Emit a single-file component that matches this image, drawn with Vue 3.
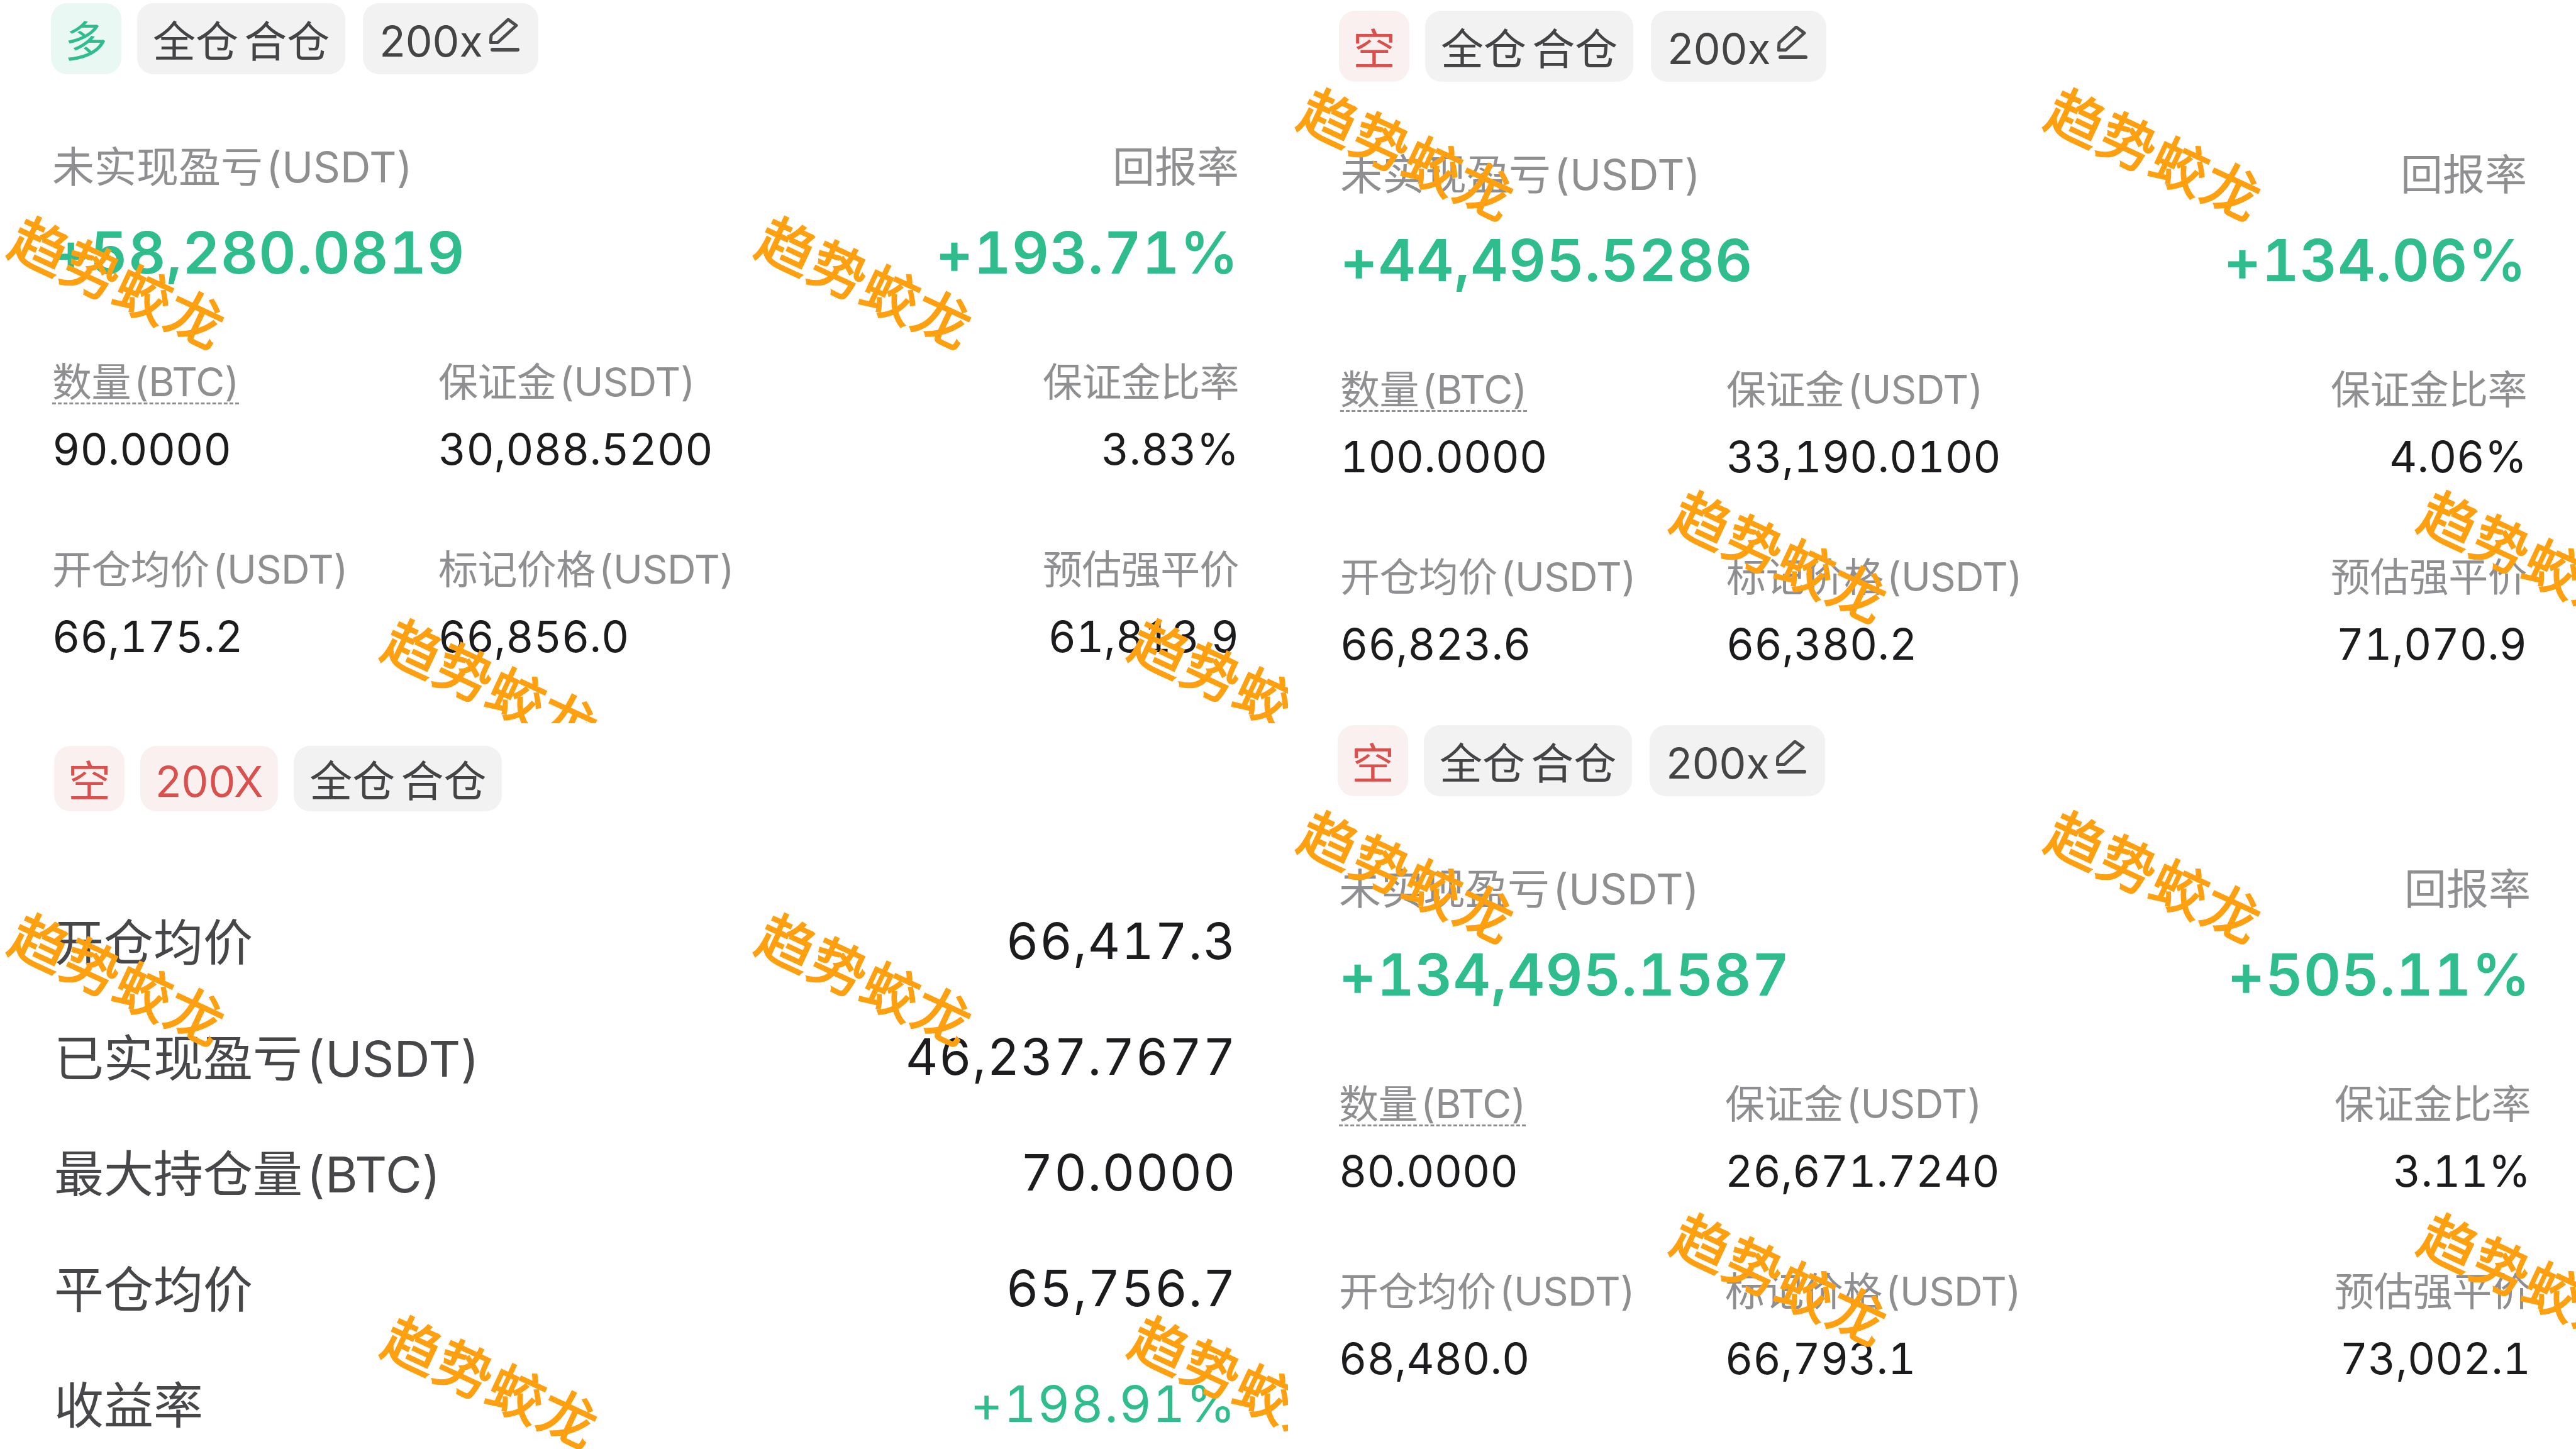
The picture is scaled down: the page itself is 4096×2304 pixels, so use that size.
<script setup>
const positions = [
  {
    cls: 'p-lt', side: '多', sideCls: 'long',
    pnl: '+58,280.0819', roe: '+193.71%',
    qtyUnit: '90.0000', margin: '30,088.5200', ratio: '3.83%',
    open: '66,175.2', mark: '66,856.0', liq: '61,813.9',
    marks: [[190, 445], [1378, 445], [783, 1085], [1971, 1085]],
  },
  {
    cls: 'p-rt', side: '空', sideCls: 'short',
    pnl: '+44,495.5286', roe: '+134.06%',
    qtyUnit: '100.0000', margin: '33,190.0100', ratio: '4.06%',
    open: '66,823.6', mark: '66,380.2', liq: '71,070.9',
    marks: [[192, 241], [1380, 241], [785, 881], [1973, 881]],
  },
  {
    cls: 'p-rb', side: '空', sideCls: 'short',
    pnl: '+134,495.1587', roe: '+505.11%',
    qtyUnit: '80.0000', margin: '26,671.7240', ratio: '3.11%',
    open: '68,480.0', mark: '66,793.1', liq: '73,002.1',
    marks: [[192, 254], [1380, 254], [785, 894], [1973, 894]],
  },
]
const history = [
  { label: '开仓均价', value: '66,417.3' },
  { label: '已实现盈亏 (USDT)', value: '46,237.7677' },
  { label: '最大持仓量 (BTC)', value: '70.0000' },
  { label: '平仓均价', value: '65,756.7' },
  { label: '收益率', value: '+198.91%', up: true },
]
const historyMarks = [[190, 403], [1378, 403], [783, 1043], [1971, 1043]]
const wmStyle = (m) => ({ left: m[0] + 'px', top: m[1] + 'px' })
</script>

<template>
  <div class="page">
    <div class="col">
      <section class="panel p-lt">
        <div class="tags">
          <span class="tag side long">多</span>
          <span class="tag">全仓 合仓</span>
          <span class="tag lev"><span>200x</span><svg class="pen" viewBox="0 0 48 54" width="48" height="54" fill="none" stroke="#4c4c4e" stroke-width="5" stroke-linejoin="round" stroke-linecap="round"><path d="M30 2 L43 11.5 L13.5 38.5 L2 38.5 L3 27 Z" /><path d="M5 50 H45" stroke-width="6" /></svg></span>
        </div>
        <div class="head"><span>未实现盈亏 (USDT)</span><span>回报率</span></div>
        <div class="big"><span>{{ positions[0].pnl }}</span><span>{{ positions[0].roe }}</span></div>
        <div class="grid">
          <span class="lb"><span class="dash">数量 (BTC)</span></span>
          <span class="lb">保证金 (USDT)</span>
          <span class="lb r">保证金比率</span>
          <span class="val">{{ positions[0].qtyUnit }}</span>
          <span class="val">{{ positions[0].margin }}</span>
          <span class="val r">{{ positions[0].ratio }}</span>
          <span class="lb row3">开仓均价 (USDT)</span>
          <span class="lb row3">标记价格 (USDT)</span>
          <span class="lb row3 r">预估强平价</span>
          <span class="val">{{ positions[0].open }}</span>
          <span class="val">{{ positions[0].mark }}</span>
          <span class="val r">{{ positions[0].liq }}</span>
        </div>
        <span v-for="(m, i) in positions[0].marks" :key="i" class="wm" :style="wmStyle(m)">趋势蛟龙</span>
      </section>

      <section class="panel p-lb">
        <div class="tags tags-h">
          <span class="tag side short">空</span>
          <span class="tag x short">200X</span>
          <span class="tag">全仓 合仓</span>
        </div>
        <div class="hist">
          <div v-for="row in history" :key="row.label" class="hrow">
            <span class="hl">{{ row.label }}</span>
            <span class="hv" :class="{ up: row.up }">{{ row.value }}</span>
          </div>
        </div>
        <span v-for="(m, i) in historyMarks" :key="i" class="wm" :style="wmStyle(m)">趋势蛟龙</span>
      </section>
    </div>

    <div class="col">
      <section v-for="p in positions.slice(1)" :key="p.pnl" class="panel" :class="p.cls">
        <div class="tags">
          <span class="tag side" :class="p.sideCls">{{ p.side }}</span>
          <span class="tag">全仓 合仓</span>
          <span class="tag lev"><span>200x</span><svg class="pen" viewBox="0 0 48 54" width="48" height="54" fill="none" stroke="#4c4c4e" stroke-width="5" stroke-linejoin="round" stroke-linecap="round"><path d="M30 2 L43 11.5 L13.5 38.5 L2 38.5 L3 27 Z" /><path d="M5 50 H45" stroke-width="6" /></svg></span>
        </div>
        <div class="head"><span>未实现盈亏 (USDT)</span><span>回报率</span></div>
        <div class="big"><span>{{ p.pnl }}</span><span>{{ p.roe }}</span></div>
        <div class="grid">
          <span class="lb"><span class="dash">数量 (BTC)</span></span>
          <span class="lb">保证金 (USDT)</span>
          <span class="lb r">保证金比率</span>
          <span class="val">{{ p.qtyUnit }}</span>
          <span class="val">{{ p.margin }}</span>
          <span class="val r">{{ p.ratio }}</span>
          <span class="lb row3">开仓均价 (USDT)</span>
          <span class="lb row3">标记价格 (USDT)</span>
          <span class="lb row3 r">预估强平价</span>
          <span class="val">{{ p.open }}</span>
          <span class="val">{{ p.mark }}</span>
          <span class="val r">{{ p.liq }}</span>
        </div>
        <span v-for="(m, i) in p.marks" :key="i" class="wm" :style="wmStyle(m)">趋势蛟龙</span>
      </section>
    </div>
  </div>
</template>

<style scoped>
.page {
  width: 4096px;
  height: 2304px;
  display: flex;
  background: #fff;
  overflow: hidden;
  font-family: Inter, "Noto Sans CJK SC", sans-serif;
  font-variant-numeric: tabular-nums;
}
.col {
  width: 2048px;
  display: flex;
  flex-direction: column;
}
.panel {
  position: relative;
  overflow: hidden;
  box-sizing: border-box;
  padding: 5px 78px 0 83px;
}
.p-lt { height: 1150px; }
.p-lb { height: 1154px; padding: 36px 82px 0 86px; }
.p-rt { height: 1136px; padding-top: 17px; }
.p-rb { height: 1168px; padding-top: 17px; padding-right: 72px; padding-left: 81px; }

.tags {
  display: flex;
  gap: 25px;
  height: 113px;
  margin-left: -2px;
}
.tags-h { height: 104px; margin-left: 0; }
.tag {
  display: flex;
  align-items: center;
  box-sizing: border-box;
  padding: 8px 25px 0;
  border-radius: 26px;
  background: #f2f2f3;
  color: #444446;
  font-size: 68px;
  font-variant-numeric: normal;
  line-height: 1;
  white-space: pre;
  word-spacing: -10px;
}
.tag.side { padding-left: 22px; padding-right: 22px; }
.tag.x { padding-left: 24px; padding-right: 24px; }
.tag.long { background: #e9f8f2; color: #2fbd8e; }
.tag.short { background: #fbf0f0; color: #d9504c; }
.lev { gap: 10px; margin-left: 3px; padding: 6px 30px 0 26px; font-size: 68px; }
.pen { margin-top: -18px; }

.head {
  display: flex;
  justify-content: space-between;
  margin-top: 108px;
  height: 80px;
  line-height: 80px;
  font-size: 67px;
  color: #8f8f91;
  word-spacing: -14px;
}
.big {
  display: flex;
  justify-content: space-between;
  margin-top: 41px;
  height: 110px;
  line-height: 110px;
  font-size: 92px;
  font-weight: 600;
  color: #2fbd8e;
  letter-spacing: 1px;
}
.grid {
  display: grid;
  grid-template-columns: 614px 1fr auto;
  margin-top: 110px;
}
.lb {
  height: 80px;
  line-height: 80px;
  font-size: 63px;
  color: #8f8f91;
  white-space: nowrap;
  word-spacing: -12px;
  letter-spacing: -0.6px;
}
.dash {
  text-decoration: underline dashed #8f8f91 3px;
  text-underline-offset: 10px;
  text-decoration-skip-ink: none;
}
.row3 { margin-top: 110px; }
.val {
  margin-top: 28px;
  height: 80px;
  line-height: 80px;
  font-size: 68.5px;
  color: #1c1c1e;
  white-space: nowrap;
}
.r { text-align: right; }

.hist {
  display: flex;
  flex-direction: column;
  margin-top: 113px;
}
.hrow {
  display: flex;
  justify-content: space-between;
  align-items: center;
  height: 184px;
}
.hl { font-size: 79px; color: #47474a; word-spacing: -16px; margin-bottom: 4px; }
.hv { font-size: 80px; color: #1c1c1e; letter-spacing: 1.5px; }
.hv.up { color: #2fbd8e; }

.wm {
  position: absolute;
  transform: translate(-50%, -50%) rotate(25deg);
  font-family: "Noto Sans CJK SC", sans-serif;
  font-size: 89px;
  font-weight: 400;
  -webkit-text-stroke: 2.5px #ffa011;
  line-height: 1;
  letter-spacing: 2px;
  color: #ffa011;
  white-space: nowrap;
  pointer-events: none;
}
</style>

<style>
html, body { background: #fff; }
</style>
